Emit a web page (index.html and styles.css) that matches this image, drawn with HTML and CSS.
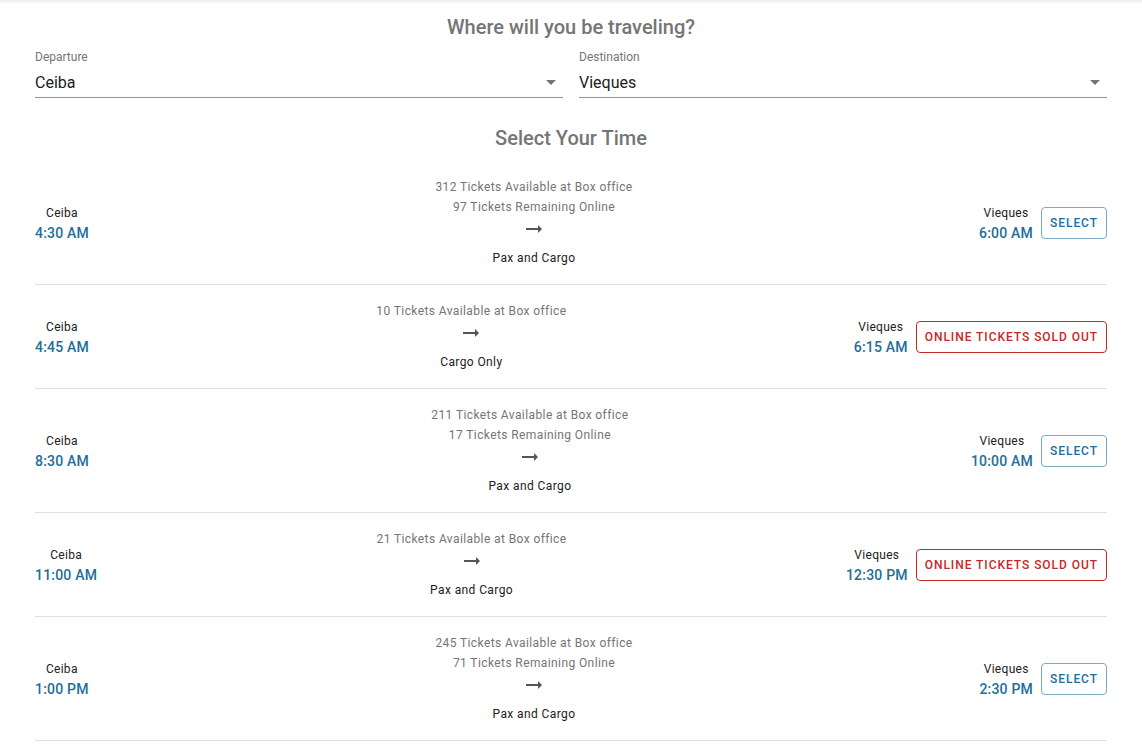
FILE: index.html
```html
<!DOCTYPE html>
<html>
<head>
<meta charset="utf-8">
<link rel="stylesheet" href="styles.css">
</head>
<body>
<div class="topbar"></div>
<main class="page">
  <h2 class="title">Where will you be traveling?</h2>
  <div class="fields">
    <div class="field">
      <div class="label">Departure</div>
      <div class="control"><span>Ceiba</span><span class="caret"></span></div>
    </div>
    <div class="field">
      <div class="label">Destination</div>
      <div class="control"><span>Vieques</span><span class="caret"></span></div>
    </div>
  </div>
  <h2 class="title title2">Select Your Time</h2>
  <div class="list">
    <div class="row">
      <div class="stop"><div class="place">Ceiba</div><div class="time">4:30 AM</div></div>
      <div class="info">
        <div class="avail">312 Tickets Available at Box office</div>
        <div class="avail">97 Tickets Remaining Online</div>
        <svg class="arrow" viewBox="0 0 24 24" width="24" height="24"><path d="M16.01 11H4v2h12.01v3L20 12l-3.99-4z"/></svg>
        <div class="kind">Pax and Cargo</div>
      </div>
      <div class="end">
        <div class="stop"><div class="place">Vieques</div><div class="time">6:00 AM</div></div>
        <button class="btn">Select</button>
      </div>
    </div>
    <div class="row">
      <div class="stop"><div class="place">Ceiba</div><div class="time">4:45 AM</div></div>
      <div class="info">
        <div class="avail">10 Tickets Available at Box office</div>
        <svg class="arrow" viewBox="0 0 24 24" width="24" height="24"><path d="M16.01 11H4v2h12.01v3L20 12l-3.99-4z"/></svg>
        <div class="kind">Cargo Only</div>
      </div>
      <div class="end">
        <div class="stop"><div class="place">Vieques</div><div class="time">6:15 AM</div></div>
        <button class="btn sold">Online Tickets Sold Out</button>
      </div>
    </div>
    <div class="row">
      <div class="stop"><div class="place">Ceiba</div><div class="time">8:30 AM</div></div>
      <div class="info">
        <div class="avail">211 Tickets Available at Box office</div>
        <div class="avail">17 Tickets Remaining Online</div>
        <svg class="arrow" viewBox="0 0 24 24" width="24" height="24"><path d="M16.01 11H4v2h12.01v3L20 12l-3.99-4z"/></svg>
        <div class="kind">Pax and Cargo</div>
      </div>
      <div class="end">
        <div class="stop"><div class="place">Vieques</div><div class="time">10:00 AM</div></div>
        <button class="btn">Select</button>
      </div>
    </div>
    <div class="row">
      <div class="stop"><div class="place">Ceiba</div><div class="time">11:00 AM</div></div>
      <div class="info">
        <div class="avail">21 Tickets Available at Box office</div>
        <svg class="arrow" viewBox="0 0 24 24" width="24" height="24"><path d="M16.01 11H4v2h12.01v3L20 12l-3.99-4z"/></svg>
        <div class="kind">Pax and Cargo</div>
      </div>
      <div class="end">
        <div class="stop"><div class="place">Vieques</div><div class="time">12:30 PM</div></div>
        <button class="btn sold">Online Tickets Sold Out</button>
      </div>
    </div>
    <div class="row">
      <div class="stop"><div class="place">Ceiba</div><div class="time">1:00 PM</div></div>
      <div class="info">
        <div class="avail">245 Tickets Available at Box office</div>
        <div class="avail">71 Tickets Remaining Online</div>
        <svg class="arrow" viewBox="0 0 24 24" width="24" height="24"><path d="M16.01 11H4v2h12.01v3L20 12l-3.99-4z"/></svg>
        <div class="kind">Pax and Cargo</div>
      </div>
      <div class="end">
        <div class="stop"><div class="place">Vieques</div><div class="time">2:30 PM</div></div>
        <button class="btn">Select</button>
      </div>
    </div>
  </div>
</main>
</body>
</html>
```
FILE: styles.css
```css
* { box-sizing: border-box; }
html, body { margin: 0; padding: 0; background: #fff; }
body {
  font-family: Roboto, "Liberation Sans", Arial, sans-serif;
  color: #212121;
}
.topbar {
  height: 4px;
  background: linear-gradient(#ececec, #fff);
}
.page {
  padding: 11px 35px 0;
}
.title {
  margin: 0;
  text-align: center;
  font-size: 20px;
  line-height: 24px;
  font-weight: 500;
  color: #757575;
}
.title2 { margin-top: 28px; }
.fields {
  display: flex;
  gap: 16px;
  margin-top: 10px;
}
.field { flex: 1; }
.label {
  font-size: 12px;
  line-height: 16px;
  color: #757575;
}
.control {
  display: flex;
  align-items: center;
  justify-content: space-between;
  height: 33px;
  font-size: 16px;
  color: #212121;
  border-bottom: 1px solid #949494;
  padding-top: 2px;
}
.caret {
  width: 0; height: 0;
  border-left: 5px solid transparent;
  border-right: 5px solid transparent;
  border-top: 5px solid #757575;
  margin-right: 7px;
}
.list { margin-top: 11px; }
.row {
  display: flex;
  align-items: center;
  padding: 16px 0;
  border-bottom: 1px solid #e0e0e0;
}
.stop {
  text-align: center;
  white-space: nowrap;
}
.place {
  font-size: 12px;
  line-height: 20px;
  color: #212121;
  letter-spacing: 0.3px;
}
.time {
  font-size: 14px;
  line-height: 20px;
  font-weight: 500;
  color: #1e6e98;
  letter-spacing: 0.2px;
}
.info {
  flex: 1;
  display: flex;
  flex-direction: column;
  align-items: center;
  text-align: center;
}
.avail {
  font-size: 12px;
  line-height: 20px;
  color: #757575;
  letter-spacing: 0.4px;
}
.arrow {
  display: block;
  fill: #555;
}
.kind {
  margin-top: 7px;
  font-size: 12px;
  line-height: 20px;
  color: #212121;
  letter-spacing: 0.4px;
}
.end {
  display: flex;
  align-items: center;
  gap: 8px;
}
.btn {
  font-family: inherit;
  height: 32px;
  padding: 0 8px;
  background: #fff;
  border: 1px solid #7aa9c4;
  border-radius: 4px;
  color: #1e6e98;
  font-size: 12px;
  font-weight: 500;
  letter-spacing: 0.95px;
  text-transform: uppercase;
}
.btn.sold {
  border-color: #c62828;
  color: #c62828;
}
```
